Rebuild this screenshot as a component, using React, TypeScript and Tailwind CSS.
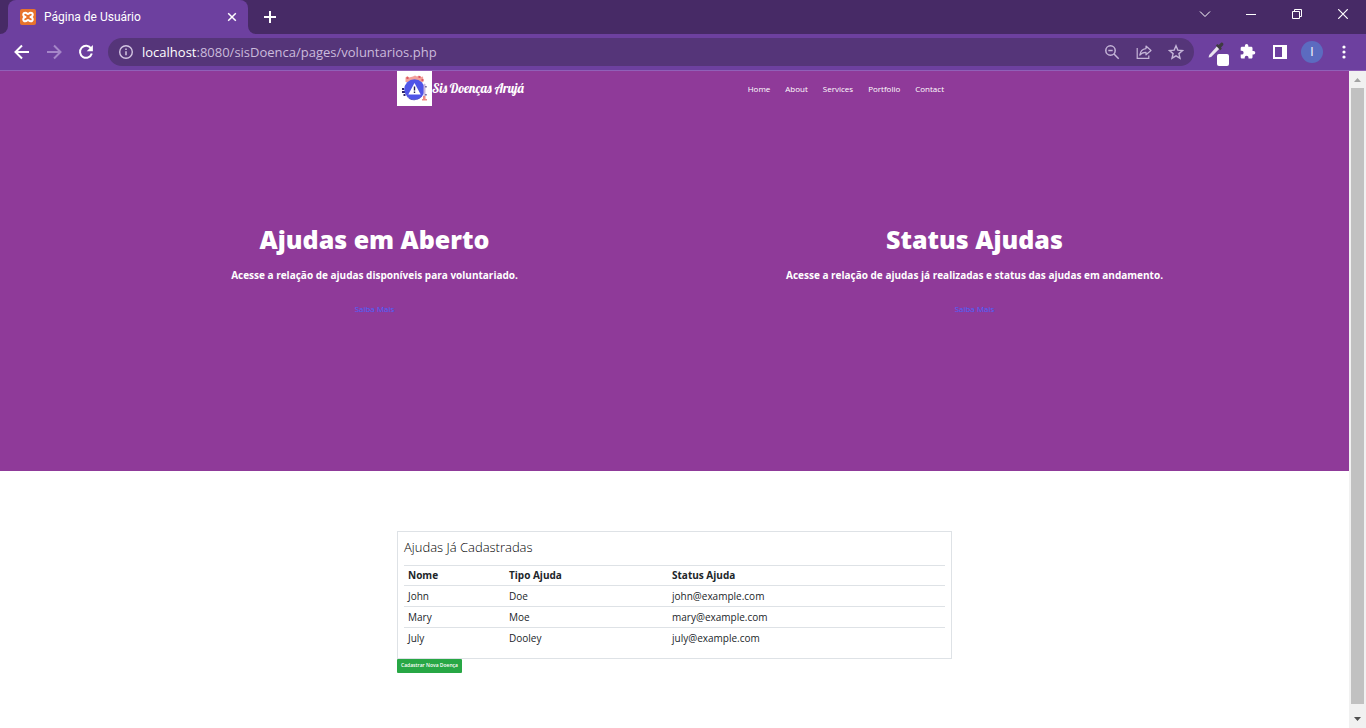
import type { ReactNode } from "react";

const navLinks = ["Home", "About", "Services", "Portfolio", "Contact"];

const banners = [
  {
    title: "Ajudas em Aberto",
    text: "Acesse a relação de ajudas disponíveis para voluntariado.",
  },
  {
    title: "Status Ajudas",
    text: "Acesse a relação de ajudas já realizadas e status das ajudas em andamento.",
  },
];

const rows = [
  ["John", "Doe", "john@example.com"],
  ["Mary", "Moe", "mary@example.com"],
  ["July", "Dooley", "july@example.com"],
];

function IconButton({ label, className = "", children }: { label: string; className?: string; children: ReactNode }) {
  return (
    <button type="button" aria-label={label} className={`flex shrink-0 items-center justify-center ${className}`}>
      {children}
    </button>
  );
}

function XamppIcon() {
  return (
    <svg width="16" height="16" viewBox="0 0 16 16" aria-hidden="true">
      <rect width="16" height="16" rx="2" fill="#e8732c" />
      <path
        d="M5.500 8C2.500 7.200 2.600 3.700 5.300 3.700c1.700 0 1.700 1.300 2.700 1.300s1-1.300 2.700-1.300c2.700 0 2.800 3.500-.2 4.300 3 .8 2.900 4.300.2 4.300-1.700 0-1.700-1.300-2.700-1.300s-1 1.300-2.700 1.300c-2.700 0-2.800-3.500.2-4.300z"
        fill="none"
        stroke="#fff"
        strokeWidth="2"
        strokeLinejoin="round"
      />
    </svg>
  );
}

function TabStrip() {
  return (
    <div className="flex h-[34px] shrink-0 items-stretch bg-[#472a66]">
      <div className="flex w-2 bg-[#6d409f]">
        <div className="flex-1 rounded-br-lg bg-[#472a66]" />
      </div>
      <div className="bg-[#472a66]">
        <div className="flex h-full w-60 items-center rounded-t-lg bg-[#6d409f] pl-3 pr-2">
          <XamppIcon />
          <span className="ml-2 flex-1 font-['Segoe_UI',Roboto,sans-serif] text-[12px] leading-4 text-white">Página de Usuário</span>
          <IconButton label="Fechar guia" className="size-4">
            <svg width="16" height="16" viewBox="0 0 16 16" stroke="#fff" strokeWidth="1.500">
              <path d="M4.200 4.200l7.600 7.600M11.800 4.200l-7.600 7.600" />
            </svg>
          </IconButton>
        </div>
      </div>
      <div className="flex w-2 bg-[#6d409f]">
        <div className="flex-1 rounded-bl-lg bg-[#472a66]" />
      </div>
      <IconButton label="Nova guia" className="w-7">
        <svg width="14" height="14" viewBox="0 0 14 14" stroke="#fff" strokeWidth="2">
          <path d="M7 1v12M1 7h12" />
        </svg>
      </IconButton>
      <div className="ml-auto flex pb-[6px]">
        <IconButton label="Pesquisar guias" className="w-[46px]">
          <svg width="12" height="12" viewBox="0 0 12 12" fill="none" stroke="#fff">
            <path d="M1 3.500l5 5 5-5" />
          </svg>
        </IconButton>
        <IconButton label="Minimizar" className="w-[46px]">
          <svg width="10" height="10" viewBox="0 0 10 10" stroke="#fff">
            <path d="M0 5.500h10" />
          </svg>
        </IconButton>
        <IconButton label="Restaurar" className="w-[46px]">
          <svg width="10" height="10" viewBox="0 0 10 10" fill="none" stroke="#fff">
            <path d="M.5 2.500h7v7h-7zM2.500 2.500v-2h7v7h-2" />
          </svg>
        </IconButton>
        <IconButton label="Fechar" className="w-[46px]">
          <svg width="10" height="10" viewBox="0 0 10 10" stroke="#fff" strokeWidth="1.200">
            <path d="M.2.2l9.600 9.600M9.800.2L.2 9.800" />
          </svg>
        </IconButton>
      </div>
    </div>
  );
}

function Toolbar() {
  return (
    <div className="flex h-[37px] shrink-0 items-center border-b border-[#9060b8] bg-[#6d409f] pl-[6px] pr-[6px]">
      <IconButton label="Voltar" className="size-8">
        <svg width="16" height="16" viewBox="0 0 16 16" fill="none" stroke="#fff" strokeWidth="2">
          <path d="M15 8H2M8 1.500L1.500 8 8 14.500" />
        </svg>
      </IconButton>
      <IconButton label="Avançar" className="size-8">
        <svg width="16" height="16" viewBox="0 0 16 16" fill="none" stroke="#a586c8" strokeWidth="2">
          <path d="M1 8h13M8 1.500L14.500 8 8 14.500" />
        </svg>
      </IconButton>
      <IconButton label="Recarregar" className="size-8">
        <svg width="16" height="16" viewBox="0 0 16 16">
          <path d="M13.100 4.600A6 6 0 1 0 13.800 9.500" fill="none" stroke="#fff" strokeWidth="2" />
          <path d="M14.900 1v6.200H8.700z" fill="#fff" />
        </svg>
      </IconButton>
      <div className="ml-[6px] flex h-7 flex-1 items-center rounded-full bg-[#553579] pl-[10px] pr-[10px] text-[13px] leading-5">
        <IconButton label="Ver informações do site" className="size-4">
          <svg width="16" height="16" viewBox="0 0 16 16" fill="none" stroke="#d3c5e2">
            <circle cx="8" cy="8" r="6.300" strokeWidth="1.400" />
            <path d="M8 7.200v4M8 4.600v1.500" strokeWidth="1.500" />
          </svg>
        </IconButton>
        <label htmlFor="address" className="ml-2 text-white">
          localhost
        </label>
        <input
          id="address"
          type="text"
          defaultValue=":8080/sisDoenca/pages/voluntarios.php"
          className="min-w-0 flex-1 bg-transparent text-[#cbbbdc] outline-none"
        />
        <div className="flex gap-4">
          <IconButton label="Zoom" className="size-4">
            <svg width="16" height="16" viewBox="0 0 16 16" fill="none" stroke="#c5b5d8" strokeWidth="1.500">
              <circle cx="6.500" cy="6.500" r="4.700" />
              <path d="M10 10l4.700 4.700M4.300 6.500h4.400" />
            </svg>
          </IconButton>
          <IconButton label="Compartilhar" className="size-4">
            <svg width="16" height="16" viewBox="0 0 16 16" fill="none" stroke="#c5b5d8" strokeWidth="1.200">
              <path d="M1.200 4v10.400h11.600v-3" />
              <path d="M10 2l5 4.500-5 4.300V8.300C7 8.200 5.200 9.100 3.800 11.200 4.300 7.500 6.300 5 10 4.600z" strokeLinejoin="round" />
            </svg>
          </IconButton>
          <IconButton label="Adicionar aos favoritos" className="size-4">
            <svg width="16" height="16" viewBox="0 0 16 16" fill="none" stroke="#c5b5d8" strokeWidth="1.400">
              <path d="M8 1.800l1.800 4.300 4.700.4-3.600 3.100 1.100 4.600L8 11.800l-4 2.400 1.100-4.600L1.500 6.500l4.700-.4z" />
            </svg>
          </IconButton>
        </div>
      </div>
      <IconButton label="Conta-gotas" className="ml-[10px] h-8 w-7">
        <svg width="22" height="28" viewBox="0 0 22 28">
          <path d="M1.600 19.500l.6-2.600 7.800-8.600 2.600 2.300-8.500 8.500z" fill="#e8e3ee" />
          <path d="M8.800 7.500l1.600-1.600 1.200 1 2.200-2c1.500-1.200 3.500.8 2.300 2.400l-2.100 2.300.8 1.100-1.600 1.600z" fill="#3e3b40" />
          <rect x="10" y="16" width="12" height="12" rx="2" fill="#fff" />
        </svg>
      </IconButton>
      <IconButton label="Extensões" className="size-8">
        <svg width="16" height="16" viewBox="1 1 23 23" fill="#fff">
          <path d="M20.500 11H19V7c0-1.100-.9-2-2-2h-4V3.500a2.500 2.500 0 0 0-5 0V5H4c-1.100 0-2 .9-2 2v3.800h1.500a2.700 2.700 0 0 1 0 5.400H2V20c0 1.100.9 2 2 2h3.800v-1.500a2.700 2.700 0 0 1 5.400 0V22H17c1.100 0 2-.9 2-2v-4h1.500a2.500 2.500 0 0 0 0-5z" />
        </svg>
      </IconButton>
      <IconButton label="Painel lateral" className="size-8">
        <svg width="14" height="14" viewBox="0 0 14 14">
          <path d="M1 1h12v12H1z" fill="none" stroke="#fff" strokeWidth="2" />
          <path d="M9 1h5v12H9z" fill="#fff" />
        </svg>
      </IconButton>
      <IconButton label="Perfil" className="size-8">
        <span className="flex size-[22px] items-center justify-center rounded-full bg-[#5c6bc0] text-[12px] text-white">I</span>
      </IconButton>
      <IconButton label="Menu do navegador" className="size-8">
        <svg width="4" height="14" viewBox="0 0 4 14" fill="#fff">
          <circle cx="2" cy="2" r="1.600" />
          <circle cx="2" cy="7" r="1.600" />
          <circle cx="2" cy="12" r="1.600" />
        </svg>
      </IconButton>
    </div>
  );
}

function SiteLogo() {
  return (
    <svg width="35" height="35" viewBox="0 0 35 35" aria-hidden="true">
      <rect width="35" height="35" fill="#fff" />
      <path d="M8.500 11V6.500l2-1.500 1.500 1.500 4-1 2-1 2 1 2-1 2 1.500 2-.5.500 5.500z" fill="#f2a09a" />
      <path d="M9.500 6h2v2h-2zM21.500 5h2v2h-2zM24.500 8h2v2h-2z" fill="#dc5a63" />
      <path d="M5 17h2v2H5zM5 20h3v2H5zM6.500 23h2v2h-2zM28 15h1.500v1.500H28zM28 23h1.500v1.500H28z" fill="#2b2369" />
      <circle cx="17.500" cy="18.500" r="10.300" fill="#4f55e8" />
      <path d="M9.500 25c4 4.500 12 4.500 15.500 0-2.500 5-12 6-15.500 0z" fill="#3d3ab8" />
      <path d="M26.500 13.500l1-1 1 1V25h-2z" fill="#c9b8e0" />
      <path d="M26 25h2.500v3H30v1.500h-5V28h1z" fill="#ef8b84" />
      <path d="M17.500 12l6.200 11.500H11.300z" fill="#fff" />
      <path d="M17.500 15.500v4M17.500 20.500v1.600" stroke="#29235c" strokeWidth="1.400" />
    </svg>
  );
}

function Scrollbar() {
  return (
    <div aria-hidden="true" className="flex w-[17px] shrink-0 flex-col items-center bg-[#f1f1f1]">
      <svg width="17" height="17" viewBox="0 0 17 17">
        <path d="M5 11l3.500-4 3.500 4z" fill="#a3a3a3" />
      </svg>
      <div className="w-[13px] flex-1 bg-[#c1c1c1]" />
      <svg width="17" height="24" viewBox="0 0 17 24">
        <path d="M5 13l3.500 4 3.500-4z" fill="#505050" />
      </svg>
    </div>
  );
}

function SitePage() {
  return (
    <div className="min-w-0 flex-1 overflow-hidden bg-white font-['Open_Sans',sans-serif] text-[#212529]">
      <section className="flex h-[400px] flex-col bg-[#8f3a99] text-white">
        <header className="mx-auto flex w-[555px] items-center justify-between">
          <a href="#inicio" className="flex items-center">
            <SiteLogo />
            <span className="pb-px font-['Lobster','Liberation_Serif',serif] text-[13px] leading-5">Sis Doenças Arujá</span>
          </a>
          <nav className="flex gap-[15px] pr-2 text-[8px] font-medium leading-3">
            {navLinks.map((link) => (
              <a key={link} href={`#${link.toLowerCase()}`}>
                {link}
              </a>
            ))}
          </nav>
        </header>
        <div className="mx-auto grid w-full max-w-[1200px] flex-1 grid-cols-2 pt-[115px] text-center">
          {banners.map((banner) => (
            <article key={banner.title}>
              <h1 className="text-[25px] font-extrabold leading-9">{banner.title}</h1>
              <p className="mt-[10px] text-[10px] font-bold leading-4">{banner.text}</p>
              <a href="#saiba-mais" className="mt-5 inline-block text-[8px] leading-3 text-[#4a63ff]">
                Saiba Mais
              </a>
            </article>
          ))}
        </div>
      </section>
      <section className="mx-auto mt-[60px] w-[555px]">
        <div className="border border-[#dee2e6] px-[6px] pb-[10px] pt-[7px]">
          <h2 className="text-[13px] font-light leading-4 text-black">Ajudas Já Cadastradas</h2>
          <table className="mt-[10px] w-full table-fixed text-left text-[10px] leading-3">
            <colgroup>
              <col className="w-[101px]" />
              <col className="w-[163px]" />
              <col />
            </colgroup>
            <thead>
              <tr className="border-y border-[#dee2e6]">
                {["Nome", "Tipo Ajuda", "Status Ajuda"].map((head) => (
                  <th key={head} scope="col" className="px-1 pb-1 pt-[3px] font-bold">
                    {head}
                  </th>
                ))}
              </tr>
            </thead>
            <tbody>
              {rows.map((row) => (
                <tr key={row[0]} className="border-t border-[#dee2e6]">
                  {row.map((cell) => (
                    <td key={cell} className="p-1">
                      {cell}
                    </td>
                  ))}
                </tr>
              ))}
            </tbody>
          </table>
        </div>
        <button type="button" className="block rounded-[1px] bg-[#28a745] px-1 pb-[3px] pt-px text-[5px] font-semibold leading-[10px] text-white">
          Cadastrar Nova Doença
        </button>
      </section>
    </div>
  );
}

export default function App() {
  return (
    <div className="flex h-screen flex-col overflow-hidden font-['Open_Sans',sans-serif]">
      <TabStrip />
      <Toolbar />
      <main className="flex min-h-0 flex-1">
        <SitePage />
        <Scrollbar />
      </main>
    </div>
  );
}
